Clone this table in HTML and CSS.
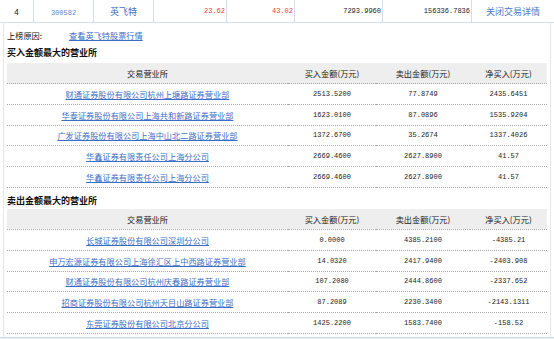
FILE: index.html
```html
<!DOCTYPE html>
<html lang="zh-CN">
<head>
    <meta charset="UTF-8">
    <title>英飞特 交易详情</title>
    <link rel="stylesheet" href="styles.css">
</head>
<body>
    <table class="stock-row">
        <tr>
            <td class="c-no">4</td>
            <td class="c-code"><a href="#">300582</a></td>
            <td class="c-name"><a href="#">英飞特</a></td>
            <td class="num red">23.62</td>
            <td class="num red">43.02</td>
            <td class="num">7293.9960</td>
            <td class="num">156336.7836</td>
            <td class="c-close"><a href="#">关闭交易详情</a></td>
        </tr>
    </table>

    <div class="detail">
        <div class="reason">
            <span class="reason-label">上榜原因:</span>
            <a href="#" class="link">查看英飞特股票行情</a>
        </div>

        <h3>买入金额最大的营业所</h3>
        <table class="trade">
            <tr>
                <th class="t-name">交易营业所</th>
                <th class="t-buy">买入金额(万元)</th>
                <th class="t-sell">卖出金额(万元)</th>
                <th class="t-net">净买入(万元)</th>
            </tr>
            <tr><td><a href="#" class="link">财通证券股份有限公司杭州上塘路证券营业部</a></td><td class="n">2513.5200</td><td class="n">77.8749</td><td class="n">2435.6451</td></tr>
            <tr><td><a href="#" class="link">华泰证券股份有限公司上海共和新路证券营业部</a></td><td class="n">1623.0100</td><td class="n">87.0896</td><td class="n">1535.9204</td></tr>
            <tr><td><a href="#" class="link">广发证券股份有限公司上海中山北二路证券营业部</a></td><td class="n">1372.6700</td><td class="n">35.2674</td><td class="n">1337.4026</td></tr>
            <tr><td><a href="#" class="link">华鑫证券有限责任公司上海分公司</a></td><td class="n">2669.4600</td><td class="n">2627.8900</td><td class="n">41.57</td></tr>
            <tr><td><a href="#" class="link">华鑫证券有限责任公司上海分公司</a></td><td class="n">2669.4600</td><td class="n">2627.8900</td><td class="n">41.57</td></tr>
        </table>

        <h3 class="second">卖出金额最大的营业所</h3>
        <table class="trade">
            <tr>
                <th class="t-name">交易营业所</th>
                <th class="t-buy">买入金额(万元)</th>
                <th class="t-sell">卖出金额(万元)</th>
                <th class="t-net">净买入(万元)</th>
            </tr>
            <tr><td><a href="#" class="link">长城证券股份有限公司深圳分公司</a></td><td class="n">0.0000</td><td class="n">4385.2100</td><td class="n">-4385.21</td></tr>
            <tr><td><a href="#" class="link">申万宏源证券有限公司上海徐汇区上中西路证券营业部</a></td><td class="n">14.0320</td><td class="n">2417.9400</td><td class="n">-2403.908</td></tr>
            <tr><td><a href="#" class="link">财通证券股份有限公司杭州庆春路证券营业部</a></td><td class="n">107.2080</td><td class="n">2444.8600</td><td class="n">-2337.652</td></tr>
            <tr><td><a href="#" class="link">招商证券股份有限公司杭州天目山路证券营业部</a></td><td class="n">87.2089</td><td class="n">2230.3400</td><td class="n">-2143.1311</td></tr>
            <tr><td><a href="#" class="link">东莞证券股份有限公司北京分公司</a></td><td class="n">1425.2200</td><td class="n">1583.7400</td><td class="n">-158.52</td></tr>
        </table>
    </div>
    <div class="foot"></div>
</body>
</html>
```

FILE: styles.css
```css
body {
    margin: 0;
    font-family: "Noto Sans CJK SC", "Liberation Sans", sans-serif;
    font-size: 8.2px;
    color: #333;
    background: #fff;
}
a {
    text-decoration: none;
}
.link {
    color: #3b6fc7;
    text-decoration: underline;
}
table {
    border-collapse: collapse;
}

/* stock summary row */
.stock-row {
    width: 554px;
    table-layout: fixed;
}
.stock-row td {
    height: 22px;
    padding: 0 1px;
    border: 1px solid #d3deeb;
    border-top: none;
    text-align: center;
}
.stock-row td:first-child {
    border-left: none;
}
.stock-row td:last-child {
    border-right: none;
}
.c-no { width: 31px; color: #222; }
.c-code { width: 57px; }
.c-name { width: 57px; }
.c-code a {
    color: #5a86cf;
    font-family: "Liberation Mono", monospace;
    font-size: 7px;
}
.c-name a {
    color: #3b6fc7;
    font-size: 9px;
}
.c-close a {
    color: #4a7ccc;
    font-size: 9px;
}
.stock-row .num {
    text-align: right;
    font-family: "Liberation Mono", monospace;
    font-size: 7px;
    color: #222;
}
.stock-row td:nth-child(4) { width: 70px; }
.stock-row td:nth-child(5) { width: 65px; }
.stock-row td:nth-child(6) { width: 85px; }
.stock-row td:nth-child(7) { width: 86px; }
.stock-row .red {
    color: #f03a3a;
}

/* detail panel */
.detail {
    margin: 0 3px;
    padding: 0 3px 3px;
    border-left: 1px solid #e3e7ec;
    border-right: 1px solid #e3e7ec;
}
.reason {
    padding-top: 6px;
    line-height: 13px;
    display: flex;
}
.reason-label {
    width: 62px;
    color: #111;
}
.detail h3 {
    margin: 5px 0 4px;
    font-size: 9px;
    line-height: 12px;
    color: #111;
}
.detail h3.second {
    margin-top: 7px;
    margin-bottom: 2px;
}
.trade {
    width: 540px;
    table-layout: fixed;
}
.trade th {
    height: 20px;
    padding: 0;
    font-weight: normal;
    background: #eeeeee;
    color: #222;
    border-bottom: 1px dotted #a8a8a8;
}
.trade td {
    height: 19.8px;
    padding: 0;
    text-align: center;
    border-bottom: 1px dotted #a8a8a8;
}
.t-name { width: 281px; }
.t-buy { width: 88px; }
.t-sell { width: 94px; }
.t-net { width: 77px; }
.trade .n {
    font-family: "Liberation Mono", monospace;
    font-size: 7px;
    color: #222;
}
.foot {
    height: 4px;
    border-top: 1px solid #c9d8e8;
    background: #e9eef4;
}
```
